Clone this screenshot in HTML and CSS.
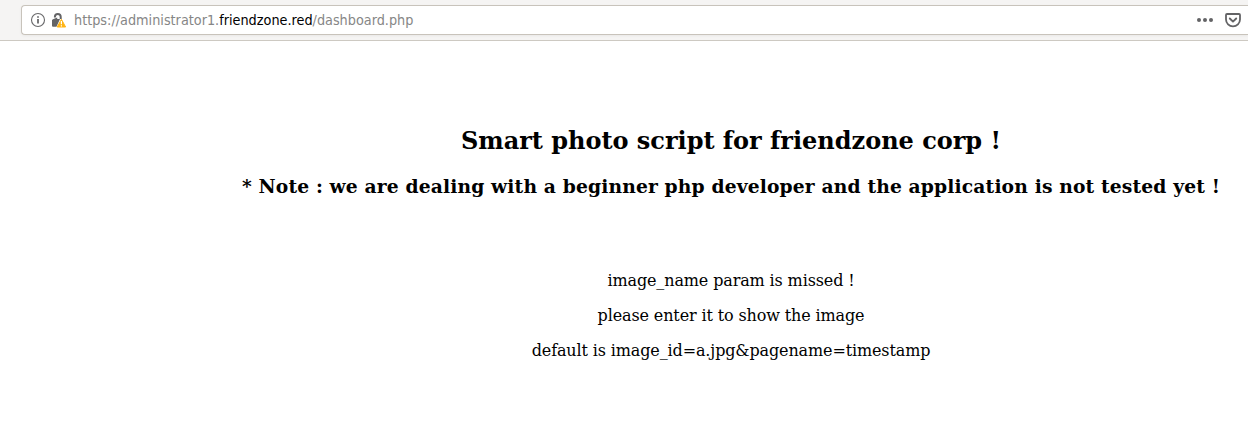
FILE: index.html
```html
<!DOCTYPE html>
<html lang="en">
<head>
<meta charset="utf-8">
<title>Dashboard</title>
<link rel="stylesheet" href="styles.css">
</head>
<body>
<header class="toolbar">
  <div class="urlbar">
    <svg class="icon-info" width="16" height="16" viewBox="0 0 16 16"><circle cx="8" cy="8" r="6.500" fill="none" stroke="#68686a" stroke-width="1.100"/><path d="M7.200 7h1.600v4.500H7.200zM7.200 4.200h1.600v1.600H7.200z" fill="#58585a"/></svg>
    <svg class="icon-lock" width="16" height="16" viewBox="0 0 16 16"><path d="M3.900 5.400V4.800a2.900 2.900 0 0 1 5.800 0V7" fill="none" stroke="#636365" stroke-width="2"/><path d="M2 7.200L6.200 5.600V7H9L5.500 14.800H2q-1 0-1-1V8z" fill="#636365"/><path d="M10.400 7.300L14.600 15H6.200z" fill="#ffb414" stroke="#ffb414" stroke-linejoin="round"/><path d="M9.800 9h1.200v3.300H9.800zM9.800 13.200h1.200v1.200H9.800z" fill="#fff"/></svg>
    <span class="url">https://administrator1.<span class="domain">friendzone.red</span>/dashboard.php</span>
    <svg class="icon-more" width="16" height="16" viewBox="0 0 16 16"><g fill="#636365"><circle cx="2" cy="8" r="2"/><circle cx="8" cy="8" r="2"/><circle cx="14" cy="8" r="2"/></g></svg>
    <svg class="icon-pocket" width="16" height="16" viewBox="0 0 16 16"><path d="M2 2h12q1 0 1 1v4.500a7 6.800 0 0 1-14 0V3q0-1 1-1z" fill="none" stroke="#636365" stroke-width="1.800"/><path d="M4.800 6.500L8 9.600l3.200-3.100" fill="none" stroke="#636365" stroke-width="1.900" stroke-linecap="round" stroke-linejoin="round"/></svg>
  </div>
</header>
<main class="page">
  <h2 class="title">Smart photo script for friendzone corp !</h2>
  <h3 class="note">* Note : we are dealing with a beginner php developer and the application is not tested yet !</h3>
  <div class="messages">
    <p class="message">image_name param is missed !</p>
    <p class="message">please enter it to show the image</p>
    <p class="message">default is image_id=a.jpg&amp;pagename=timestamp</p>
  </div>
</main>
</body>
</html>
```
FILE: styles.css
```css
body { margin: 0; background: #fff; color: #000; overflow: hidden; font-family: "DejaVu Serif", serif; }
.toolbar { box-sizing: border-box; height: 41px; padding: 5px 0 0 21px; background: #f5f4f3; border-bottom: 1px solid #cdc9c2; }
.urlbar { box-sizing: border-box; display: flex; align-items: center; height: 30px; padding: 0 7px 0 8px; background: #fff; border: 1px solid #c8c3bb; border-right: 0; border-radius: 4px 0 0 4px; box-shadow: 0 1px 3px rgba(0, 0, 0, .05); }
.icon-lock { margin-left: 5px; }
.url { flex: 1; margin-left: 7px; font: 14.290px "DejaVu Sans Condensed", "DejaVu Sans", sans-serif; color: #868686; white-space: nowrap; }
.domain { color: #000; }
.icon-pocket { margin-left: 12px; }
.page { width: 978px; margin-left: 242px; padding-top: 86px; text-align: center; white-space: nowrap; }
.title { margin: 0; font-size: 24px; line-height: 28px; letter-spacing: -.02px; }
.note { margin: 20px 0 0; font-size: 18.72px; line-height: 22px; letter-spacing: .142px; }
.messages { padding-top: 74px; }
.message { margin: 0 0 16px; font-size: 16px; line-height: 19px; letter-spacing: -.13px; }
```
